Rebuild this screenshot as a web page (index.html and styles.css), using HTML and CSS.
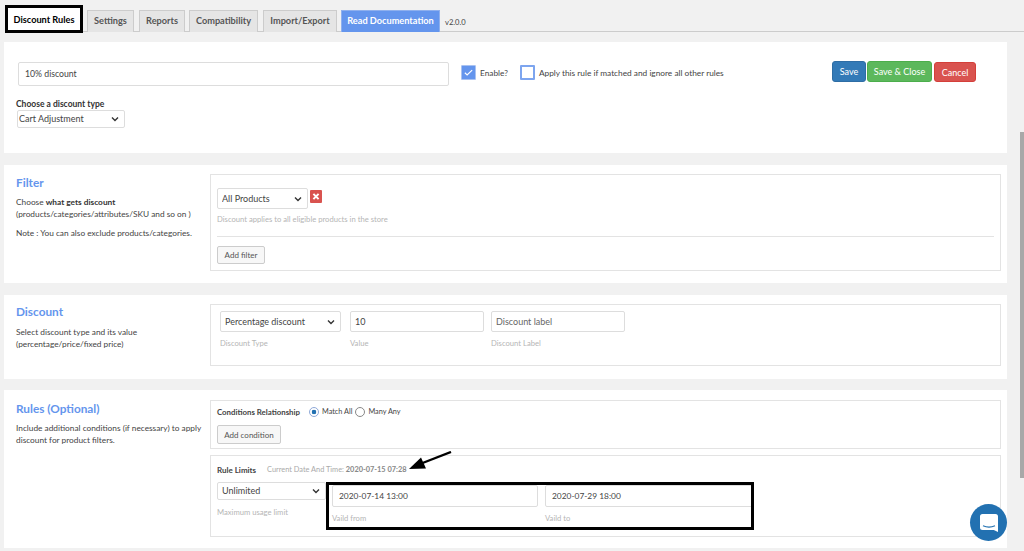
FILE: index.html
```html
<!DOCTYPE html>
<html lang="en">
<head>
<meta charset="utf-8">
<title>Discount Rules</title>
<link rel="stylesheet" href="styles.css">
</head>
<body>
<div class="page">
  <nav class="tabs">
    <a class="tab tab-active">Discount Rules</a>
    <a class="tab tab-settings">Settings</a>
    <a class="tab tab-reports">Reports</a>
    <a class="tab tab-compat">Compatibility</a>
    <a class="tab tab-import">Import/Export</a>
    <a class="tab tab-docs">Read Documentation</a>
    <span class="version">v2.0.0</span>
  </nav>

  <section class="card card-head">
    <div class="head-row">
      <input class="field name-field" type="text" value="10% discount">
      <span class="check check-on"><svg viewBox="0 0 16 16" width="13" height="13"><path d="M3.500 8.300l2.800 2.700L12.500 5" fill="none" stroke="#fff" stroke-width="1.400"/></svg></span>
      <span class="check-label">Enable?</span>
      <span class="check check-off"></span>
      <span class="check-label">Apply this rule if matched and ignore all other rules</span>
      <div class="actions">
        <button class="btn btn-save">Save</button>
        <button class="btn btn-close">Save &amp; Close</button>
        <button class="btn btn-cancel">Cancel</button>
      </div>
    </div>
    <label class="type-label">Choose a discount type</label>
    <select class="select type-select"><option>Cart Adjustment</option></select>
  </section>

  <section class="card card-filter">
    <div class="intro">
      <h2>Filter</h2>
      <p class="tight">Choose <b>what gets discount</b><br>(products/categories/attributes/SKU and so on )</p>
      <p>Note : You can also exclude products/categories.</p>
    </div>
    <div class="panel panel-filter">
      <div class="filter-row">
        <select class="select filter-select"><option>All Products</option></select>
        <span class="remove"><svg viewBox="0 0 12 13" width="12" height="13"><path d="M3.400 3.900l5.200 5.200M8.600 3.900l-5.200 5.200" stroke="#fff" stroke-width="2"/></svg></span>
      </div>
      <div class="hint">Discount applies to all eligible products in the store</div>
      <hr class="rule">
      <button class="btn-plain btn-filter">Add filter</button>
    </div>
  </section>

  <section class="card card-discount">
    <div class="intro">
      <h2>Discount</h2>
      <p class="tight">Select discount type and its value<br>(percentage/price/fixed price)</p>
    </div>
    <div class="panel panel-discount">
      <div class="col col-type">
        <select class="select discount-select"><option>Percentage discount</option></select>
        <span class="hint">Discount Type</span>
      </div>
      <div class="col col-value">
        <input class="field short-field" type="text" value="10">
        <span class="hint">Value</span>
      </div>
      <div class="col">
        <input class="field short-field" type="text" placeholder="Discount label">
        <span class="hint">Discount Label</span>
      </div>
    </div>
  </section>

  <section class="card card-rules">
    <div class="intro">
      <h2>Rules (Optional)</h2>
      <p class="tight">Include additional conditions (if necessary) to apply<br>discount for product filters.</p>
    </div>
    <div class="rules-stack">
      <div class="panel panel-conditions">
        <div class="relation">
          <b>Conditions Relationship</b>
          <span class="radio radio-on"></span><span>Match All</span>
          <span class="radio radio-second"></span><span>Many Any</span>
        </div>
        <button class="btn-plain btn-condition">Add condition</button>
      </div>
      <div class="panel panel-limits">
        <div class="limits-title"><b class="limits-name">Rule Limits</b><span class="now">Current Date And Time: <b>2020-07-15 07:28</b></span></div>
        <div class="limits-row">
          <div class="col col-limit">
            <select class="select limit-select"><option>Unlimited</option></select>
            <span class="hint">Maximum usage limit</span>
          </div>
          <div class="dates">
            <div class="col col-date">
              <input class="field date-field" type="text" value="2020-07-14 13:00">
              <span class="hint">Vaild from</span>
            </div>
            <div class="col col-date">
              <input class="field date-field" type="text" value="2020-07-29 18:00">
              <span class="hint">Vaild to</span>
            </div>
          </div>
        </div>
      </div>
    </div>
  </section>
</div>

<svg class="arrow" viewBox="0 0 44 22" width="44" height="22"><path d="M43 1L12 13" stroke="#000" stroke-width="2.400" fill="none"/><path d="M1 18L13 6.500l5 11z" fill="#000"/></svg>
<div class="chat"><svg viewBox="0 0 20 20" width="20" height="20"><path d="M3.500 1h13A2.500 2.500 0 0 1 19 3.500V19l-4.200-2H3.500A2.500 2.500 0 0 1 1 14.500v-11A2.500 2.500 0 0 1 3.500 1z" fill="#fff"/><path d="M4 12.800c3.500 1.500 8.500 1.500 12 0" fill="none" stroke="#2271b1" stroke-width="1.200"/></svg></div>
<div class="thumb"></div>
</body>
</html>
```

FILE: styles.css
```css
* { box-sizing: border-box; }
html, body { margin: 0; height: 551px; overflow: hidden; }
body {
  background: #f1f1f1;
  color: #444;
  font-family: Lato, "Open Sans", sans-serif;
  font-size: 8.300px;
  position: relative;
}
.page { padding: 5px 17px 0 4px; }

.tabs {
  display: flex;
  align-items: flex-end;
  height: 27px;
  border-bottom: 1px solid #ccc;
  margin-left: 1px;
  width: 1019px;
  margin-bottom: 10px;
}
.tab {
  height: 22px;
  line-height: 20px;
  background: #e5e5e5;
  border: 1px solid #ccc;
  border-bottom: 0;
  color: #555;
  font-weight: 700;
  font-size: 9.200px;
  text-align: center;
  flex: none;
  margin-bottom: -1px;
}
.tab-active {
  width: 78px;
  height: 28px;
  line-height: 23px;
  background: #fff;
  border: 3px solid #000;
  color: #000;
  margin-bottom: -2px;
  margin-right: 4px;
  position: relative;
}
.tab-settings { width: 47px; margin-right: 5px; }
.tab-reports { width: 46px; margin-right: 4px; }
.tab-compat { width: 69px; margin-right: 5px; }
.tab-import { width: 74px; margin-right: 4px; }
.tab-docs { width: 99px; background: #6495ed; border-color: #8fb0ee; color: #fff; }
.version { margin-left: 5px; font-size: 7.600px; color: #444; line-height: 17px; }

.card { background: #fff; width: 1003px; margin-bottom: 12px; }
.card-head { height: 111px; padding: 20px 14px 0 14px; }
.card-filter { height: 118px; padding: 10px 6px 0 12px; display: flex; }
.card-discount { height: 84px; padding: 9px 6px 0 12px; display: flex; margin-bottom: 11px; }
.card-rules { height: 158px; padding: 10px 6px 0 12px; display: flex; margin-bottom: 0; }

.head-row { display: flex; align-items: flex-start; height: 37px; }
.field {
  height: 22px;
  border: 1px solid #ddd;
  border-radius: 2px;
  background: #fff;
  color: #444;
  font: inherit;
  font-size: 9px;
  padding: 0 6px;
  outline: 0;
}
.field::placeholder { color: #666; opacity: 1; }
.name-field { width: 431px; height: 24px; font-size: 8.700px; padding-bottom: 2px; }
.check { width: 15px; height: 15px; flex: none; margin-top: 3px; border-radius: 1px; display: flex; align-items: center; justify-content: center; }
.check-on { background: #6495ed; border: 1px solid #a9c2f1; margin-left: 12px; }
.check-off { background: #fff; border: 2px solid #7da5ef; margin-left: 12px; }
.check-label { margin: 6px 0 0 4px; line-height: 11px; }
.actions { margin-left: auto; display: flex; gap: 1px; padding-right: 17px; margin-top: -1px; }
.btn {
  height: 21px;
  border: 1px solid transparent;
  border-radius: 3px;
  color: #fff;
  font: inherit;
  font-size: 9px;
  padding: 0;
}
.btn-save { width: 34px; background: #337ab7; border-color: #2e6da4; }
.btn-close { width: 65px; background: #5cb85c; border-color: #4cae4c; }
.btn-cancel { width: 42px; background: #d9534f; border-color: #d43f3a; margin-left: 1px; margin-top: 1px; height: 20px; }
.type-label { display: block; font-weight: 700; font-size: 8.500px; line-height: 10px; margin: 0 0 1px -2px; color: #333; }
.select {
  display: block;
  height: 21px;
  border: 1px solid #ddd;
  border-radius: 2px;
  background: #fff url("data:image/svg+xml,%3Csvg xmlns='http://www.w3.org/2000/svg' width='8' height='6'%3E%3Cpath d='M1 1.500l3 3 3-3' fill='none' stroke='%23333' stroke-width='1.400'/%3E%3C/svg%3E") no-repeat right 5px center;
  color: #444;
  font: inherit;
  font-size: 9px;
  outline: 0;
  appearance: none;
  padding: 0 0 1px 4px;
}
.type-select { width: 108px; height: 18px; margin-left: -1px; padding-left: 1px; }

.intro { width: 194px; flex: none; }
.intro h2 { margin: 0; color: #6495ed; font-size: 11.800px; line-height: 15px; font-weight: 700; }
.card-rules h2 { margin-top: 1px; }
.intro p { margin: 0 0 7px; line-height: 12px; color: #444; }
.intro .tight { margin-top: 6px; }
.card-discount .intro .tight { margin-top: 7px; }
.intro b { color: #333; }

.panel { border: 1px solid #e3e3e3; background: #fff; width: 791px; flex: none; }
.panel-filter { height: 97px; padding: 13px 6px 0; margin-top: -1px; }
.filter-row { display: flex; align-items: flex-start; }
.filter-select { width: 91px; }
.remove { width: 12px; height: 13px; background: #d9534f; border-radius: 1px; margin: 2px 0 0 2px; display: block; }
.hint { color: #b5b5b5; font-size: 7.650px; line-height: 10px; display: block; }
.panel-filter .hint { margin-top: 5px; }
.rule { border: 0; border-top: 1px solid #e3e3e3; margin: 12px 0 9px; }
.btn-plain {
  height: 18px;
  background: #f7f7f7;
  border: 1px solid #ccc;
  border-radius: 2px;
  color: #555;
  font: inherit;
  font-size: 8px;
  padding: 0;
  display: block;
}
.btn-filter { width: 48px; }
.btn-condition { width: 64px; height: 19px; }

.panel-discount { height: 62px; padding: 6px 9px 0; display: flex; }
.col { display: flex; flex-direction: column; }
.col .hint { margin-top: 6px; }
.col-type { width: 130px; }
.col-value { width: 141px; }
.discount-select { width: 121px; }
.short-field { width: 134px; height: 21px; padding: 0 4px; }

.rules-stack { display: flex; flex-direction: column; gap: 6px; }
.panel-conditions { height: 49px; padding: 5px 6px 0; }
.relation { display: flex; align-items: center; height: 11px; margin-bottom: 8px; white-space: nowrap; font-size: 7.300px; }
.relation b { color: #444; width: 92px; flex: none; font-size: 7.850px; }
.radio { width: 10px; height: 10px; border: 1px solid #888; border-radius: 50%; margin-right: 3px; background: #fff; flex: none; }
.radio-second { margin-left: 3px; }
.radio-on { border-color: #8fa9d8; background: radial-gradient(circle, #2271b1 0 2px, #fff 2.600px); }
.panel-limits { height: 82px; padding: 9px 6px 0; }
.limits-title { display: flex; height: 10px; line-height: 10px; margin-bottom: 7px; white-space: nowrap; }
.limits-name { color: #444; width: 50px; flex: none; font-size: 8px; }
.now { color: #aaa; font-size: 7.400px; }
.now b { color: #888; }
.limits-row { display: flex; align-items: flex-start; }
.col-limit { width: 109px; flex: none; }
.limit-select { width: 109px; height: 18px; }
.col-limit .hint { margin-top: 7px; }
.dates {
  display: flex;
  gap: 7px;
  width: 428px;
  height: 48px;
  border: 3px solid #000;
  padding: 0 0 0 3px;
  overflow: hidden;
  flex: none;
}
.col-date { width: 206px; flex: none; }
.col-date + .col-date { width: 208px; }
.date-field { width: 100%; height: 22px; padding: 0 6px; font-size: 8.400px; }
.col-date .hint { margin-top: 6px; }

.arrow { position: absolute; left: 408px; top: 451px; }
.chat {
  position: absolute;
  left: 970px;
  top: 504px;
  width: 37px;
  height: 37px;
  border-radius: 50%;
  background: #2271b1;
  display: flex;
  align-items: center;
  justify-content: center;
}
.thumb { position: absolute; left: 1020px; top: 132px; width: 4px; height: 346px; background: #a8a8a8; }
```
